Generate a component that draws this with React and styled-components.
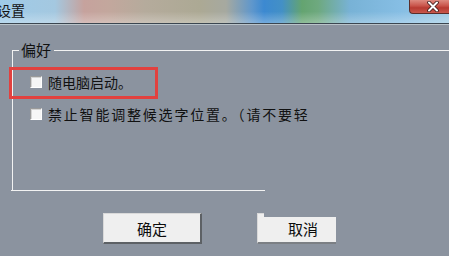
import React from 'react';
import styled, { createGlobalStyle } from 'styled-components';

const GlobalStyle = createGlobalStyle`
  html, body {
    margin: 0;
    padding: 0;
    background: #8b939f;
  }
  body {
    font-family: "Noto Sans CJK SC", "Noto Sans", sans-serif;
  }
`;

const Window = styled.div`
  width: 449px;
  height: 256px;
  overflow: hidden;
  display: flex;
  flex-direction: column;
  background: #8b939f;
`;

const TitleBar = styled.div`
  height: 23px;
  flex: none;
  display: flex;
  justify-content: space-between;
  align-items: flex-start;
  border-bottom: 1px solid #3b4650;
  box-shadow: 0 1px 0 #b9c3c9;
  background:
    linear-gradient(to bottom, rgba(255, 255, 255, 0) 50%, rgba(255, 255, 255, 0.28) 100%),
    linear-gradient(
      to right,
      #9fcbe8 0px,
      #a4c8e0 55px,
      #c6a29d 84px,
      #c3a79d 108px,
      #b5ab9c 145px,
      #aca994 200px,
      #a6a9a0 226px,
      #5f97cc 252px,
      #3c89d1 264px,
      #4390c6 282px,
      #64a470 302px,
      #6ea97f 318px,
      #78b2d6 350px,
      #86bee4 400px,
      #9ecbe4 449px
    );
`;

const Title = styled.span`
  margin: 3px 0 0 -3px;
  font-size: 14px;
  line-height: 15px;
  color: #141414;
`;

const CloseButton = styled.div`
  width: 40px;
  height: 14px;
  box-sizing: border-box;
  border-left: 1px solid #5a2e2a;
  border-bottom: 1px solid #5a2e2a;
  border-bottom-left-radius: 4px;
  background: linear-gradient(to bottom, #dd8a7f 0%, #c9544a 45%, #b73a31 60%, #c8584c 100%);
  display: flex;
  justify-content: center;
  align-items: center;
  padding-left: 6px;
`;

const Body = styled.div`
  padding-top: 19px;
  display: flex;
  flex-direction: column;
`;

const Group = styled.fieldset`
  margin: 0 0 0 12px;
  padding: 9px 0 0 0;
  height: 147px;
  box-sizing: border-box;
  border: none;
  border-top: 1px solid #f2f2f2;
  border-left: 1px solid #f2f2f2;
  min-width: 0;
  width: 460px;
`;

const Legend = styled.legend`
  margin-left: 6px;
  padding: 0 3px 0 2px;
  font-size: 15px;
  line-height: 14px;
  color: #111;
`;

const Row = styled.label`
  position: relative;
  height: 32px;
  display: flex;
  align-items: center;
  padding-left: 17px;
  gap: 6px;
  font-size: 14px;
  white-space: nowrap;
  letter-spacing: ${p => p.$spacing || 0}px;
  color: #111;
`;

const Box = styled.span`
  width: 12px;
  height: 12px;
  box-sizing: border-box;
  flex: none;
  background: #f6f6f6;
  border-top: 1px solid #9a9a9a;
  border-left: 1px solid #9a9a9a;
  border-right: 1px solid #ffffff;
  border-bottom: 1px solid #ffffff;
  box-shadow: inset 1px 1px 0 #d4d4d4;
`;

const Highlight = styled.span`
  position: absolute;
  left: -4px;
  top: 1px;
  width: 149px;
  height: 32px;
  box-sizing: border-box;
  border: 3px solid #e2413f;
  pointer-events: none;
`;

const BottomRule = styled.div`
  margin-left: 11px;
  width: 254px;
  height: 1px;
  background: #f2f2f2;
`;

const Buttons = styled.div`
  margin-top: 22px;
  padding-left: 103px;
  display: flex;
  gap: 55px;
`;

const Button = styled.div`
  width: ${p => p.$width}px;
  height: 31px;
  box-sizing: border-box;
  background: #efefef;
  border-top: 1px solid #d9d9d9;
  border-left: 1px solid #d9d9d9;
  border-right: ${p => (p.$notched ? '0' : '2px solid #5d6165')};
  border-bottom: 2px solid ${p => (p.$notched ? '#7b7f84' : '#5d6165')};
  display: flex;
  justify-content: center;
  align-items: center;
  padding-left: ${p => p.$shift || 0}px;
  font-size: 15px;
  color: #0c0c0c;
  clip-path: ${p => (p.$notched ? 'polygon(0 0, 7px 0, 7px 4px, 100% 4px, 100% 100%, 0 100%)' : 'none')};
`;

export default function App() {
  return (
    <Window>
      <GlobalStyle />
      <TitleBar>
        <Title>设置</Title>
        <CloseButton>
          <svg width="12" height="11" viewBox="0 0 12 11">
            <path d="M2 1.5 L10 9.5 M10 1.5 L2 9.5" stroke="#3a1a18" strokeWidth="3.6" strokeLinecap="round" />
            <path d="M2 1.5 L10 9.5 M10 1.5 L2 9.5" stroke="#ffffff" strokeWidth="2" strokeLinecap="round" />
          </svg>
        </CloseButton>
      </TitleBar>
      <Body>
        <Group>
          <Legend>偏好</Legend>
          <Row>
            <Box />
            随电脑启动。
            <Highlight />
          </Row>
          <Row $spacing={1.8}>
            <Box />
            禁止智能调整候选字位置。（请不要轻
          </Row>
        </Group>
        <BottomRule />
        <Buttons>
          <Button $width={99}>确定</Button>
          <Button $width={79} $notched $shift={12}>取消</Button>
        </Buttons>
      </Body>
    </Window>
  );
}
